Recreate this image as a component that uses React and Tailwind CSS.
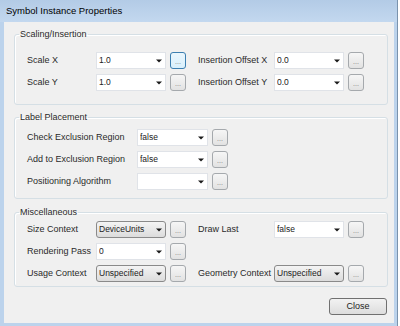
import React from "react";

const font = { fontFamily: '"Liberation Sans", Arial, sans-serif' };

function Arrow() {
  return (
    <svg width="6" height="4" viewBox="0 0 6 4" className="shrink-0">
      <path d="M0 0.5h6L3 3.5z" fill="#1a1a1a" />
    </svg>
  );
}

function Combo({ value, gray, w = "w-[70px]" }) {
  const look = gray
    ? "border-[#8a8a8a] rounded-[3px] bg-linear-to-b from-[#f4f4f4] to-[#dcdcdc]"
    : "border-[#e0e3e8] bg-white";
  return (
    <div
      className={`${w} h-[17px] border ${look} flex items-center pl-[2px] pr-[3px] shrink-0`}
    >
      <span className="flex-1 text-[8.5px] text-[#222] truncate">{value}</span>
      <Arrow />
    </div>
  );
}

function Dots({ focused }) {
  const look = focused
    ? "border-[#3c7fb1] bg-linear-to-b from-[#eaf6fd] to-[#d9f0fc]"
    : "border-[#a5a9ad] bg-linear-to-b from-[#f6f6f6] to-[#e2e2e2]";
  return (
    <div
      className={`w-[16px] h-[17px] ml-[4px] border rounded-[3px] ${look} flex items-end justify-center pb-[3px] shrink-0`}
    >
      <span className="text-[7px] leading-none text-[#777]">...</span>
    </div>
  );
}

function Field({ label, value, gray, focused, labelW, comboW }) {
  return (
    <div className="flex items-center">
      <span className={`${labelW} text-[9px] text-[#2a2a2a] shrink-0`}>{label}</span>
      <Combo value={value} gray={gray} w={comboW} />
      <Dots focused={focused} />
    </div>
  );
}

function Group({ title, className, children }) {
  return (
    <fieldset
      className={`ml-[10px] mr-[6px] border border-[#d5dfe5] rounded-[3px] shadow-[inset_1px_1px_0_#fff] ${className}`}
    >
      <legend className="ml-[4px] px-[1px] text-[9px] leading-[12px] text-[#2a2a2a]">
        {title}
      </legend>
      <div className="flex flex-col gap-[5px] pl-[12px]">{children}</div>
    </fieldset>
  );
}

export default function App() {
  return (
    <div className="w-[400px] h-[326px] bg-white" style={font}>
      <div className="w-[398px] h-[326px] bg-[#bcd3ec] border-r border-[#7a93ad] flex flex-col">
        <div className="h-[22px] bg-linear-to-b from-[#b3cbe6] to-[#c3d8ef] flex items-center pl-[6px]">
          <span className="text-[9.5px] text-black">Symbol Instance Properties</span>
        </div>
        <div className="ml-[4px] mr-[3px] h-[301px] bg-[#f0f0f0] flex flex-col pt-[6px]">
          <Group title="Scaling/Insertion" className="pt-[12px] pb-[13px]">
            <div className="flex items-center">
              <Field label="Scale X" value="1.0" focused labelW="w-[69px]" />
              <div className="ml-[12px]">
                <Field label="Insertion Offset X" value="0.0" labelW="w-[76px]" />
              </div>
            </div>
            <div className="flex items-center">
              <Field label="Scale Y" value="1.0" labelW="w-[69px]" />
              <div className="ml-[12px]">
                <Field label="Insertion Offset Y" value="0.0" labelW="w-[76px]" />
              </div>
            </div>
          </Group>
          <Group title="Label Placement" className="mt-[6px] pt-[6px] pb-[8px]">
            <Field label="Check Exclusion Region" value="false" labelW="w-[110px]" comboW="w-[71px]" />
            <Field label="Add to Exclusion Region" value="false" labelW="w-[110px]" comboW="w-[71px]" />
            <Field label="Positioning Algorithm" value="" labelW="w-[110px]" comboW="w-[71px]" />
          </Group>
          <Group title="Miscellaneous" className="mt-[7px] pt-[3px] pb-[4px]">
            <div className="flex items-center">
              <Field label="Size Context" value="DeviceUnits" gray labelW="w-[69px]" />
              <div className="ml-[12px]">
                <Field label="Draw Last" value="false" labelW="w-[76px]" />
              </div>
            </div>
            <div className="flex items-center">
              <Field label="Rendering Pass" value="0" labelW="w-[69px]" />
            </div>
            <div className="flex items-center">
              <Field label="Usage Context" value="Unspecified" gray labelW="w-[69px]" />
              <div className="ml-[12px]">
                <Field label="Geometry Context" value="Unspecified" gray labelW="w-[76px]" />
              </div>
            </div>
          </Group>
          <div className="flex justify-end mr-[7px] mt-[11px]">
            <button className="w-[58px] h-[17px] border border-[#707070] rounded-[3px] bg-linear-to-b from-[#f2f2f2] to-[#dddddd] text-[9px] text-[#222]">
              Close
            </button>
          </div>
        </div>
      </div>
    </div>
  );
}
